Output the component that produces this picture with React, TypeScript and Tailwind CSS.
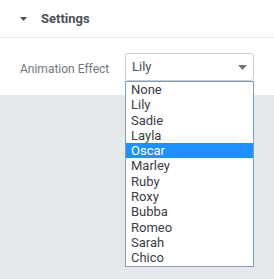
import React from "react";

const options = [
  "None",
  "Lily",
  "Sadie",
  "Layla",
  "Oscar",
  "Marley",
  "Ruby",
  "Roxy",
  "Bubba",
  "Romeo",
  "Sarah",
  "Chico",
];

const App: React.FC = () => {
  return (
    <div
      className="relative w-full h-[279px] bg-[#e6e9ec] overflow-hidden"
      style={{ fontFamily: "Roboto, 'Liberation Sans', sans-serif" }}
    >
      {/* Panel */}
      <div className="bg-white">
        <div className="h-[38px] border-b border-[#e6e9ec] flex items-center pl-[20px]">
          <svg width="7" height="4" viewBox="0 0 7 4" className="mr-[14px]">
            <path d="M0 0 L7 0 L3.5 4 Z" fill="#495157" />
          </svg>
          <span className="text-[13px] font-bold text-[#495157]">Settings</span>
        </div>
        <div className="h-[57px] flex items-start pl-[20px] pt-[15px]">
          <span className="text-[12px] text-[#6d7882] w-[105px] mt-[7px]">
            Animation Effect
          </span>
          <div className="w-[129px] h-[28px] border border-[#c9cdd1] rounded-[3px] flex items-center justify-between pl-[6px] pr-[6px]">
            <span className="text-[13px] text-[#495157]">Lily</span>
            <svg width="9" height="5" viewBox="0 0 9 5">
              <path d="M0 0 L9 0 L4.5 5 Z" fill="#6d7882" />
            </svg>
          </div>
        </div>
      </div>

      {/* Open list */}
      <div className="absolute left-[125px] top-[81px] w-[129px] bg-white border border-[#7f9db9]">
        {options.map((o) => (
          <div
            key={o}
            className={
              "h-[15.3px] leading-[15px] pl-[5px] text-[13px] " +
              (o === "Oscar" ? "bg-[#1e90ff] text-white" : "text-[#3c3c48]")
            }
          >
            {o}
          </div>
        ))}
      </div>
    </div>
  );
};

export default App;
